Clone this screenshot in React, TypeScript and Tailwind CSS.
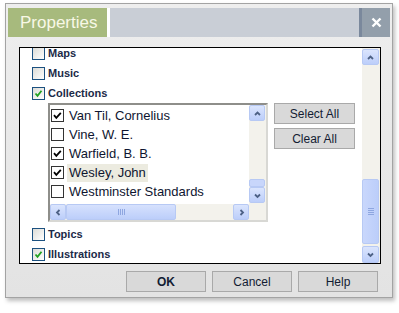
import { ReactNode } from "react";

const font = { fontFamily: '"Liberation Sans", Arial, sans-serif' };

function Chevron({ dir }: { dir: "up" | "down" | "left" | "right" }) {
  const paths: Record<string, string> = {
    up: "M2 6 L4.5 3.5 L7 6",
    down: "M2 3.5 L4.5 6 L7 3.5",
    left: "M5.5 2 L3 4.5 L5.5 7",
    right: "M3.5 2 L6 4.5 L3.5 7",
  };
  return (
    <svg width="9" height="9" viewBox="0 0 9 9">
      <path d={paths[dir]} fill="none" stroke="#4d6185" strokeWidth="1.8" />
    </svg>
  );
}

function ArrowBtn({ dir, className = "" }: { dir: "up" | "down" | "left" | "right"; className?: string }) {
  return (
    <div
      className={`flex items-center justify-center rounded-[2px] border border-[#b7c9f4] bg-gradient-to-b from-[#dbe5fd] to-[#bccefa] ${className}`}
    >
      <Chevron dir={dir} />
    </div>
  );
}

function Grip({ vertical }: { vertical?: boolean }) {
  return (
    <div className={`flex ${vertical ? "flex-col gap-[1px]" : "flex-row gap-[1px]"}`}>
      {[0, 1, 2, 3].map((i) => (
        <div key={i} className={vertical ? "h-[1px] w-[6px] bg-[#8ea6e0]" : "h-[6px] w-[1px] bg-[#8ea6e0]"} />
      ))}
    </div>
  );
}

function OuterCheck({ checked, label }: { checked?: boolean; label: string }) {
  return (
    <div className="flex h-[20px] items-center">
      <div className="flex h-[13px] w-[13px] items-center justify-center border border-[#1c5180] bg-gradient-to-br from-[#dcdcd7] to-white">
        {checked && (
          <svg width="9" height="9" viewBox="0 0 9 9">
            <path d="M1.5 4.5 L3.5 6.8 L7.5 1.8" fill="none" stroke="#21a121" strokeWidth="1.8" />
          </svg>
        )}
      </div>
      <span className="ml-[3px] text-[11px] font-bold text-[#1b2a48]">{label}</span>
    </div>
  );
}

function ListItem({ checked, label, selected }: { checked?: boolean; label?: string; selected?: boolean }) {
  return (
    <div className="flex h-[19px] items-center">
      <div className="flex h-[13px] w-[13px] items-center justify-center border border-[#333] bg-white">
        {checked && (
          <svg width="9" height="9" viewBox="0 0 9 9">
            <path d="M1 4.2 L3.3 6.8 L7.8 1.8" fill="none" stroke="#000" strokeWidth="1.8" />
          </svg>
        )}
      </div>
      {label && (
        <span className={`ml-[3px] px-[2px] text-[13px] leading-[18px] text-[#0e1530] ${selected ? "bg-[#ecebe0]" : ""}`}>
          {label}
        </span>
      )}
    </div>
  );
}

function Btn({ children, bold, className = "" }: { children: ReactNode; bold?: boolean; className?: string }) {
  return (
    <div
      className={`flex items-center justify-center border border-[#a9a9a9] bg-[#d9d9d9] text-[12px] text-[#131c33] ${bold ? "font-bold" : ""} ${className}`}
    >
      {children}
    </div>
  );
}

export default function App() {
  return (
    <div className="h-[313px] w-[399px] bg-white" style={font}>
      <div className="ml-[5px] pt-[3px]">
        <div className="flex h-[295px] w-[388px] flex-col border border-[#a3a3a3] bg-gradient-to-b from-[#eeeeee] to-[#e3e3e3] shadow-[2px_3px_4px_rgba(0,0,0,0.25)]">
          {/* title bar */}
          <div className="mx-[2px] mt-[4px] flex h-[29px]">
            <div className="flex w-[99px] items-center bg-[#a7ba7d] pl-[12px] text-[17px] text-[#f8f8e6]">Properties</div>
            <div className="w-[3px] bg-white" />
            <div className="flex-1 bg-[#c9ced6]" />
            <div className="w-[3px] bg-[#7a889c]" />
            <div className="flex w-[28px] items-center justify-center bg-[#939fab]">
              <svg width="11" height="11" viewBox="0 0 11 11">
                <path d="M1.5 1.5 L9.5 9.5 M9.5 1.5 L1.5 9.5" stroke="white" strokeWidth="2.4" />
              </svg>
            </div>
          </div>

          {/* content panel */}
          <div className="ml-[13px] mt-[10px] flex h-[217px] w-[362px] border border-black bg-white">
            <div className="flex-1 overflow-hidden pl-[12px]">
              <div className="-mt-[5px]">
                <OuterCheck label="Maps" />
                <OuterCheck label="Music" />
                <OuterCheck checked label="Collections" />
                <div className="flex">
                  <div className="ml-[16px] flex h-[119px] w-[220px] flex-col border-2 border-[#8e8e8a] border-r-[#d8d8d4] border-b-[#d8d8d4]">
                    <div className="flex flex-1 overflow-hidden">
                      <div className="flex-1 overflow-hidden pl-[1px] pt-[1px]">
                        <ListItem checked label="Van Til, Cornelius" />
                        <ListItem label="Vine, W. E." />
                        <ListItem checked label="Warfield, B. B." />
                        <ListItem checked selected label="Wesley, John" />
                        <ListItem label="Westminster Standards" />
                        <ListItem />
                      </div>
                      <div className="flex w-[17px] flex-col bg-[#f3f2ec]">
                        <ArrowBtn dir="up" className="h-[16px] w-[16px]" />
                        <div className="flex-1" />
                        <div className="h-[8px] w-[16px] rounded-[2px] border border-[#b7c9f4] bg-[#c8d6fb]" />
                        <ArrowBtn dir="down" className="mb-[1px] h-[16px] w-[16px]" />
                      </div>
                    </div>
                    <div className="flex h-[16px] bg-[#f3f2ec]">
                      <ArrowBtn dir="left" className="h-[16px] w-[16px]" />
                      <div className="flex h-[16px] w-[110px] items-center justify-center rounded-[2px] border border-[#b7c9f4] bg-gradient-to-b from-[#d6e1fd] to-[#bccefa]">
                        <Grip />
                      </div>
                      <div className="flex-1" />
                      <ArrowBtn dir="right" className="h-[16px] w-[16px]" />
                      <div className="w-[17px]" />
                    </div>
                  </div>
                  <div className="ml-[6px] flex flex-col gap-[4px]">
                    <Btn className="h-[21px] w-[81px]">Select All</Btn>
                    <Btn className="h-[21px] w-[81px]">Clear All</Btn>
                  </div>
                </div>
                <div className="mt-[2px]">
                  <OuterCheck label="Topics" />
                  <OuterCheck checked label="Illustrations" />
                </div>
              </div>
            </div>
            {/* outer scrollbar */}
            <div className="flex w-[18px] flex-col bg-[#f3f2ec] pt-[1px]">
              <ArrowBtn dir="up" className="h-[16px] w-[17px]" />
              <div className="flex-1" />
              <div className="flex h-[65px] w-[17px] items-center justify-center rounded-[2px] border border-[#b7c9f4] bg-gradient-to-r from-[#c9d7fc] to-[#bccefa]">
                <Grip vertical />
              </div>
              <ArrowBtn dir="down" className="mt-[2px] h-[17px] w-[17px]" />
            </div>
          </div>

          {/* buttons */}
          <div className="ml-[120px] mt-[7px] flex gap-[6px]">
            <Btn bold className="h-[21px] w-[80px]">OK</Btn>
            <Btn className="h-[21px] w-[80px]">Cancel</Btn>
            <Btn className="h-[21px] w-[80px]">Help</Btn>
          </div>
        </div>
      </div>
    </div>
  );
}
